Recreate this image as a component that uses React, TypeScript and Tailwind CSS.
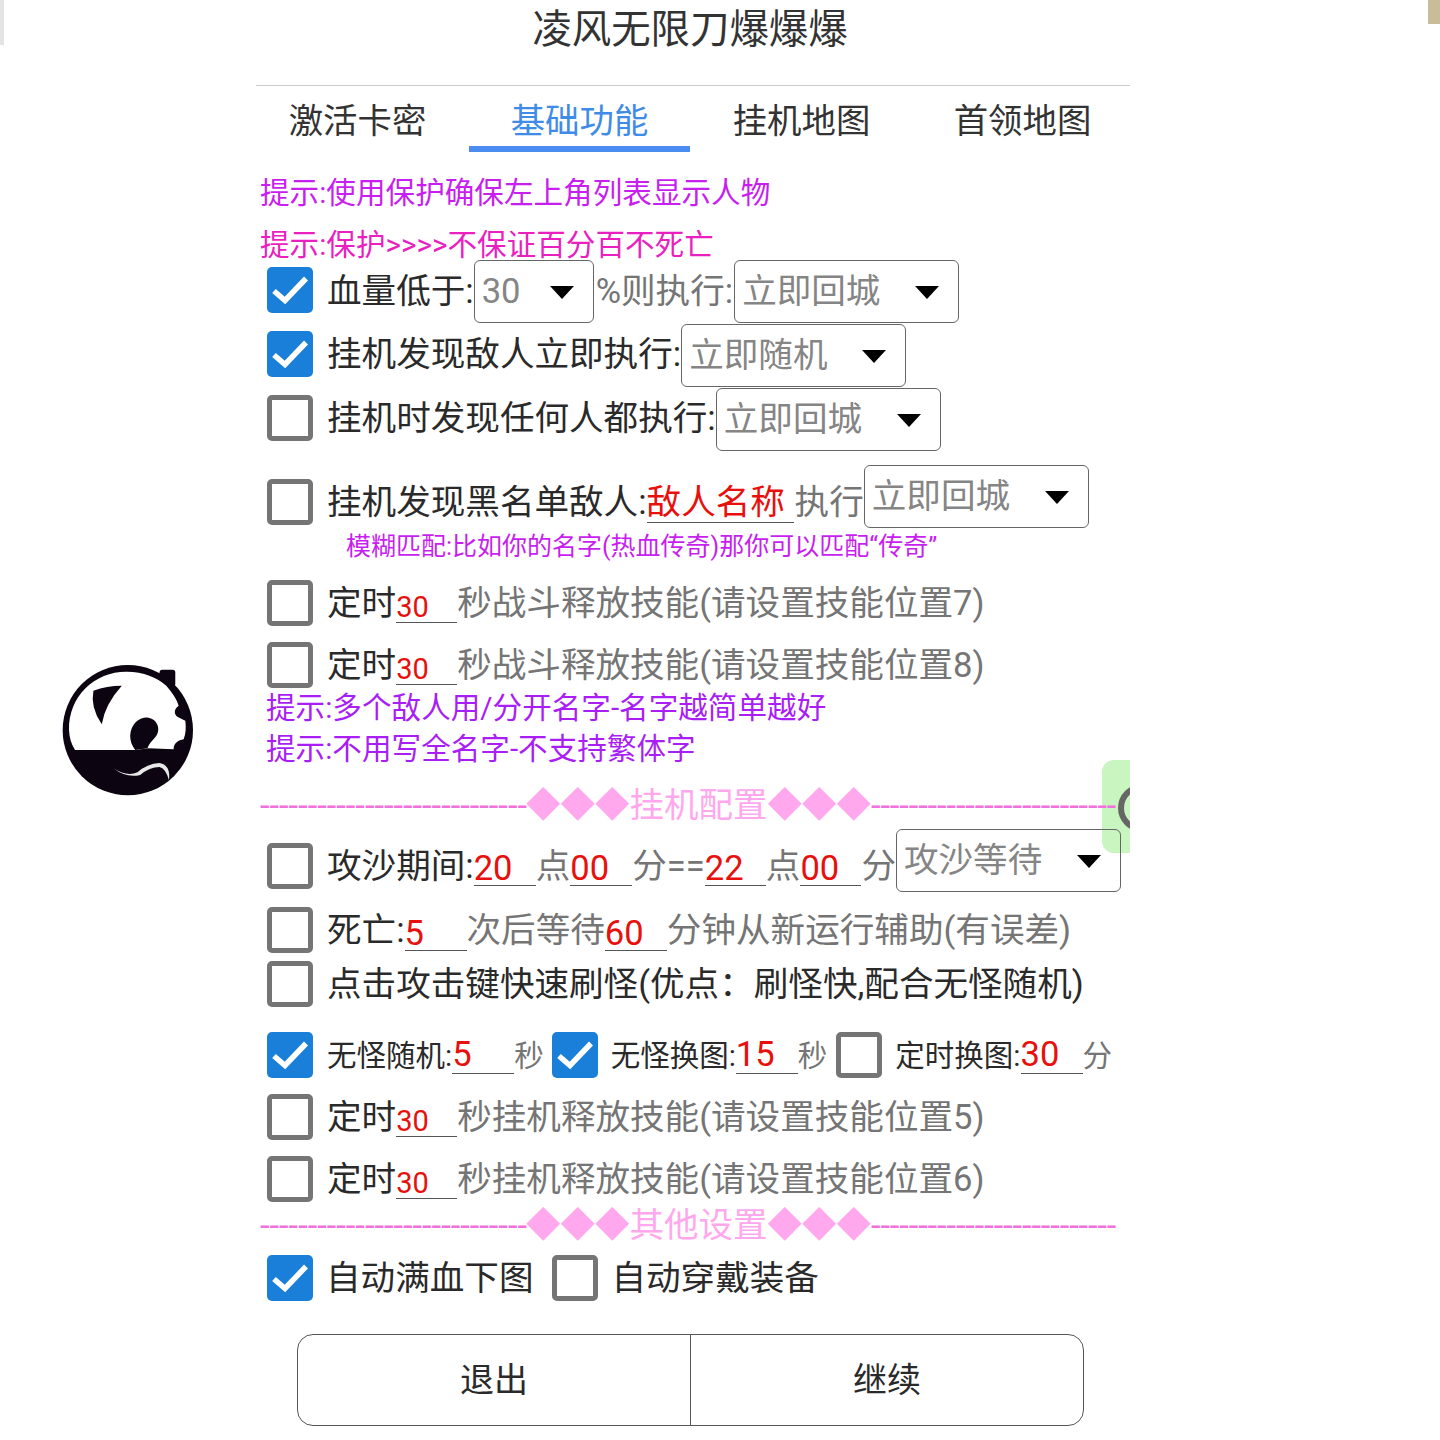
import { ReactNode } from "react";

function Check({ on, className = "mb-[2px]" }: { on?: boolean; className?: string }) {
	if (on) {
		return (
			<span className={`flex h-[46px] w-[46px] shrink-0 items-center justify-center rounded-[5px] bg-[#1a7fd8] ${className}`}>
				<svg width="46" height="46" viewBox="0 0 46 46" fill="none">
					<path d="M7 24 L18 33.5 L39 11.5" stroke="#fff" strokeWidth="5.5" />
				</svg>
			</span>
		);
	}
	return <span className={`block h-[46px] w-[46px] shrink-0 rounded-[5px] border-[5px] border-[#757575] ${className}`} />;
}

function Select({ value, width, className = "" }: { value: string; width: string; className?: string }) {
	return (
		<span className={`relative flex h-[63px] shrink-0 items-center rounded-[6px] border border-[#666] pl-[7px] pt-[1px] text-[#858585] ${width} ${className}`}>
			{value}
			<svg className="absolute right-[19px] top-[25px]" width="24" height="13" viewBox="0 0 24 13">
				<path d="M0 0 H24 L12 13 Z" fill="#000" />
			</svg>
		</span>
	);
}

function Field({ value, width, className = "" }: { value: string; width: string; className?: string }) {
	return <span className={`block shrink-0 border-b border-[#555] text-[#e8100c] ${width} ${className}`}>{value}</span>;
}

function Gray({ children, className = "" }: { children: ReactNode; className?: string }) {
	return <span className={`shrink-0 text-[#757575] ${className}`}>{children}</span>;
}

function Row({ h, children, className = "" }: { h: string; children: ReactNode; className?: string }) {
	return <div className={`flex items-center whitespace-nowrap pl-[11px] text-[34.6px] text-[#2a2a2a] ${h} ${className}`}>{children}</div>;
}

function Divider({ title, className = "" }: { title: string; className?: string }) {
	return (
		<div className={`relative flex items-center pl-[4px] text-[34.5px] leading-none whitespace-nowrap text-[#ffa8ee] ${className}`}>
			<span className="block w-[266px] text-[#f070dc]">----------------------------</span>
			<span>◆◆◆{title}◆◆◆</span>
			<span className="block w-[245px] tracking-[-0.1px] text-[#f070dc]">--------------------------</span>
		</div>
	);
}

function TimerRow({ h, middle }: { h: string; middle: string }) {
	return (
		<Row h={h}>
			<Check />
			<span className="ml-[14px]">定时</span>
			<Field value="30" width="w-[61px]" className="mt-[6px] text-[29px] leading-[30px]" />
			<Gray>{middle}</Gray>
		</Row>
	);
}

function PandaLogo() {
	return (
		<svg className="absolute left-[60px] top-[664px]" width="137" height="132" viewBox="180 70 410 395">
			<circle cx="383" cy="268" r="195" fill="#0c0410" />
			<rect x="478" y="87" width="47" height="50" rx="8" fill="#0c0410" />
			<path
				d="M207 268 C205 165 285 92 380 93 C430 93 470 110 498 135 C515 155 530 175 535 195 C520 205 518 225 540 232 L555 240 C558 262 556 280 550 295 C535 298 520 305 520 325 L445 322 L405 327 L225 327 C213 308 208 290 207 268 Z"
				fill="#fff"
			/>
			<path d="M280 150 Q320 135 365 135 Q315 190 305 250 Q270 200 280 150 Z" fill="#0c0410" />
			<path
				d="M390 285 C392 250 415 230 440 230 C468 232 482 260 470 282 C462 296 448 305 442 322 L405 327 C395 315 390 300 390 285 Z"
				fill="#0c0410"
			/>
			<path d="M340 382 Q380 408 412 394 Q440 368 478 366 Q512 372 506 418 Q498 384 478 378 Q448 378 420 402 Q378 412 340 382 Z" fill="#e8e8e8" />
		</svg>
	);
}

export default function App() {
	return (
		<div className="relative h-[1440px] overflow-hidden bg-white pl-[256px] font-['Roboto','Noto_Sans_CJK_SC',sans-serif]">
			<div className="absolute left-0 top-0 h-[45px] w-[4px] bg-[#e4e4e4]" />
			<div className="absolute right-0 top-0 h-[24px] w-[12px] bg-[#c8bd98]" />
			<PandaLogo />

			<div className="relative w-[874px]">
				<div className="absolute left-[846px] top-[760px] h-[93px] w-[28px] overflow-hidden rounded-l-[12px] bg-[#c8f5c0]">
					<div className="absolute left-[16px] top-[24px] h-[48px] w-[48px] rounded-full border-[6px] border-[#666]" />
				</div>

				<div className="flex h-[86px] items-center justify-center border-b border-[#ccc] pb-[26px] pr-[6px] text-[39.4px] text-[#333]">
					凌风无限刀爆爆爆
				</div>

				<div className="-ml-[8px] flex h-[67px] w-[886px] text-[34.4px] text-[#333]">
					<div className="flex h-[66px] w-[221px] items-center justify-center pr-[2px] pt-[6px]">激活卡密</div>
					<div className="flex h-[66px] w-[221px] items-center justify-center border-b-[6px] border-[#4a8cf0] pt-[12px] text-[#3f8ce8]">基础功能</div>
					<div className="flex h-[66px] w-[221px] items-center justify-center pl-[2px] pt-[6px]">挂机地图</div>
					<div className="flex h-[66px] w-[221px] items-center justify-center pl-[2px] pt-[6px]">首领地图</div>
				</div>

				<div className="mt-[14px] flex h-[52px] items-center pl-[4px] text-[29.6px] text-[#c81ef0]">提示:使用保护确保左上角列表显示人物</div>
				<div className="flex h-[41px] items-center pl-[4px] pt-[11px] text-[29.6px] text-[#ea1fc0]">提示:保护&gt;&gt;&gt;&gt;不保证百分百不死亡</div>

				<Row h="h-[63px]">
					<Check on className="mb-[4px]" />
					<span className="ml-[14px]">血量低于:</span>
					<Select value="30" width="w-[120px]" />
					<span className="ml-[2px] shrink-0 text-[#757575]">%则执行:</span>
					<Select value="立即回城" width="w-[225px]" className="ml-[1px]" />
				</Row>
				<Row h="h-[64px]">
					<Check on />
					<span className="ml-[14px]">挂机发现敌人立即执行:</span>
					<Select value="立即随机" width="w-[225px]" />
				</Row>
				<Row h="h-[64px]">
					<Check />
					<span className="ml-[14px]">挂机时发现任何人都执行:</span>
					<Select value="立即回城" width="w-[225px]" />
				</Row>

				<Row h="h-[63px]" className="mt-[14px]">
					<Check className="mt-[10px]" />
					<span className="ml-[14px] mt-[12px]">挂机发现黑名单敌人:</span>
					<Field value="敌人名称" width="w-[147px]" className="mt-[12px] leading-[39px]" />
					<span className="mt-[12px] ml-[1px] shrink-0 text-[#757575]">执行</span>
					<Select value="立即回城" width="w-[225px]" className="pl-[5px]" />
				</Row>
				<div className="flex h-[38px] items-center pl-[90px] text-[25px] text-[#c81ef0]">模糊匹配:比如你的名字(热血传奇)那你可以匹配“传奇”</div>

				<TimerRow h="h-[62px] mt-[7px]" middle="秒战斗释放技能(请设置技能位置7)" />
				<TimerRow h="h-[62px]" middle="秒战斗释放技能(请设置技能位置8)" />

				<div className="flex h-[32px] items-start pl-[10px] text-[29.6px] leading-[22px] text-[#a81ef5]">提示:多个敌人用/分开名字-名字越简单越好</div>
				<div className="flex h-[40px] items-center pl-[10px] text-[29.6px] text-[#a81ef5]">提示:不用写全名字-不支持繁体字</div>

				<Divider title="挂机配置" className="h-[60px] pt-[12px]" />

				<Row h="h-[63px]">
					<Check className="mt-[10px]" />
					<span className="ml-[14px] mt-[12px]">攻沙期间:</span>
					<Field value="20" width="w-[62px]" className="mt-[16px] leading-[34px]" />
					<Gray className="mt-[12px]">点</Gray>
					<Field value="00" width="w-[62px]" className="mt-[16px] leading-[34px]" />
					<Gray className="mt-[12px]">分==</Gray>
					<Field value="22" width="w-[61px]" className="mt-[16px] leading-[34px]" />
					<Gray className="mt-[12px]">点</Gray>
					<Field value="00" width="w-[61px]" className="mt-[16px] leading-[34px]" />
					<Gray className="mt-[12px]">分</Gray>
					<Select value="攻沙等待" width="w-[225px]" className="pl-[5px]" />
				</Row>
				<Row h="h-[54px]" className="mt-[12px]">
					<Check />
					<span className="ml-[14px]">死亡:</span>
					<Field value="5" width="w-[62px]" className="mt-[4px] leading-[34px]" />
					<Gray>次后等待</Gray>
					<Field value="60" width="w-[62px]" className="mt-[4px] leading-[34px]" />
					<Gray>分钟从新运行辅助(有误差)</Gray>
				</Row>
				<Row h="h-[54px]">
					<Check />
					<span className="ml-[14px]">点击攻击键快速刷怪(优点：刷怪快,配合无怪随机)</span>
				</Row>

				<Row h="h-[62px]" className="mt-[13px]">
					<Check on />
					<span className="ml-[14px] text-[29.5px]">无怪随机:</span>
					<Field value="5" width="w-[62px]" className="mb-[2px] leading-[37px]" />
					<Gray className="text-[29.5px]">秒</Gray>
					<Check on className="mb-[2px] ml-[8px]" />
					<span className="ml-[13px] text-[29.5px]">无怪换图:</span>
					<Field value="15" width="w-[62px]" className="mb-[2px] leading-[37px]" />
					<Gray className="text-[29.5px]">秒</Gray>
					<Check className="mb-[2px] ml-[9px]" />
					<span className="ml-[13px] text-[29.5px]">定时换图:</span>
					<Field value="30" width="w-[62px]" className="mb-[2px] leading-[37px]" />
					<Gray className="text-[29.5px]">分</Gray>
				</Row>

				<TimerRow h="h-[62px]" middle="秒挂机释放技能(请设置技能位置5)" />
				<TimerRow h="h-[62px]" middle="秒挂机释放技能(请设置技能位置6)" />

				<Divider title="其他设置" className="h-[28px]" />

				<Row h="h-[62px]" className="mt-[9px]">
					<Check on />
					<span className="ml-[13px]">自动满血下图</span>
					<Check className="mb-[2px] ml-[19px]" />
					<span className="ml-[13px]">自动穿戴装备</span>
				</Row>

				<div className="ml-[41px] mt-[24px] flex h-[92px] w-[787px] rounded-[16px] border border-[#555] text-[34px] text-[#2a2a2a]">
					<div className="flex w-[393px] items-center justify-center border-r border-[#555]">退出</div>
					<div className="flex flex-1 items-center justify-center">继续</div>
				</div>
			</div>
		</div>
	);
}
